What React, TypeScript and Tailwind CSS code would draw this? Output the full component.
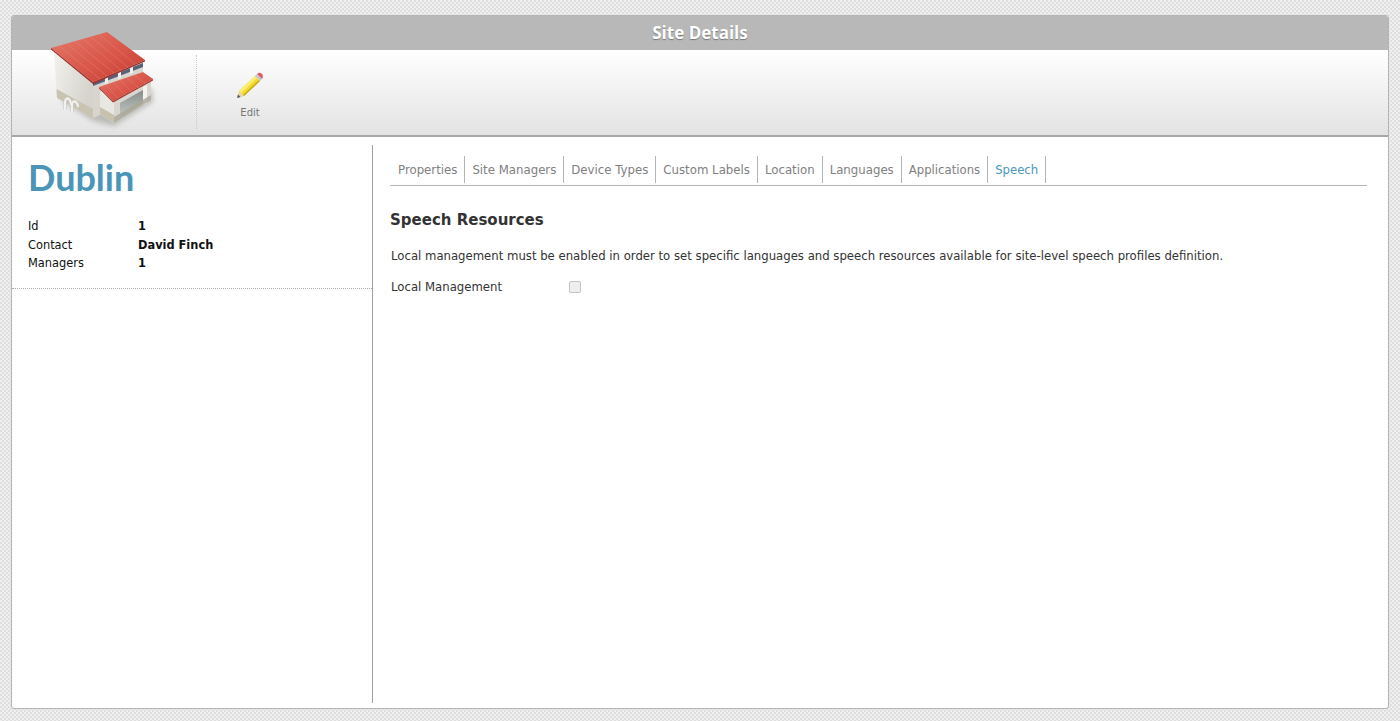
import React from "react";

function Building() {
  return (
    <svg width="125" height="105" viewBox="40 25 125 105" className="absolute left-[28px] top-[9px]">
      <defs>
        <linearGradient id="roof" x1="0" y1="0" x2="1" y2="1">
          <stop offset="0" stopColor="#e47a68" />
          <stop offset="0.55" stopColor="#d9564a" />
          <stop offset="1" stopColor="#c43c32" />
        </linearGradient>
        <linearGradient id="wall" x1="0" y1="0" x2="1" y2="0.4">
          <stop offset="0" stopColor="#f2f1ed" />
          <stop offset="1" stopColor="#d5d3cc" />
        </linearGradient>
        <linearGradient id="door" x1="0" y1="0" x2="0" y2="1">
          <stop offset="0" stopColor="#868d88" />
          <stop offset="1" stopColor="#c6cbc6" />
        </linearGradient>
        <filter id="blur" x="-30%" y="-30%" width="160%" height="160%">
          <feGaussianBlur stdDeviation="2.5" />
        </filter>
        <filter id="soft" x="-5%" y="-5%" width="110%" height="110%">
          <feGaussianBlur stdDeviation="0.35" />
        </filter>
      </defs>
      <path d="M60 100 L93 121 L114 126 L153 102 L152 88 L110 100 Z" fill="#85857f" opacity="0.45" filter="url(#blur)" />
      <g filter="url(#soft)">
        <path d="M54 52 L93 82 L93 118 L57 98 Z" fill="url(#wall)" />
        <path d="M56.5 89 L93 109 L93 118 L57 98 Z" fill="#c9c3b1" />
        <path d="M93 82 L143 62 L143 76 L100 92 L100 115 L93 118 Z" fill="#d7d5ce" />
        <path d="M93 83 L143 63 L143 67 L93 86 Z" fill="#59607a" />
        <path d="M105 77 L108 76 L108 83 L105 84 Z M118 72 L121 71 L121 78 L118 79 Z M130 67 L133 66 L133 73 L130 74 Z" fill="#f0efea" />
        <path d="M100 92 L114 102 L114 123 L100 114 Z" fill="#e9e7e1" />
        <path d="M100 107 L114 115 L114 123 L100 114 Z" fill="#c7c1ae" />
        <path d="M114 102 L151 81 L151 100 L114 123 Z" fill="#d8d6cf" />
        <path d="M120 103 L143 90 L143 103 L120 118 Z" fill="url(#door)" />
        <path d="M143 87 L147 85 L147 103 L143 105 Z" fill="#f4f3ef" />
        <path d="M114 117 L151 95 L151 100 L114 123 Z" fill="#a9a696" opacity="0.8" />
        <path d="M99 87 L143 72 L153 79 L113 101 Z" fill="url(#roof)" />
        <path d="M99 87 L113 101 L153 79 L153 80.5 L113 102.5 L99 88.5 Z" fill="#a8342b" />
        <g stroke="#e98a7a" strokeWidth="0.6" opacity="0.6">
          <path d="M106 85 L118 98 M113 82 L125 95 M120 80 L132 92 M127 78 L139 88 M134 75 L146 84" />
        </g>
        <path d="M51 48 L107 32 L145 60 L93 82 Z" fill="url(#roof)" />
        <path d="M51 48 L93 82 L145 60 L145 61.5 L93 84 L51 49.5 Z" fill="#9e3129" />
        <g stroke="#eb9384" strokeWidth="0.6" opacity="0.55">
          <path d="M59 46 L100 79 M67 44 L107 76 M75 41.5 L114 73 M83 39 L121 70 M91 37 L128 67 M99 34.5 L135 64" />
        </g>
        <g fill="none" stroke="#c4c4bf" strokeWidth="3.2">
          <path d="M65 110 L65 102 Q66 97 69 99 Q71 101 71 105" />
          <path d="M72 112 L72 104 Q73 100 76 102 Q78 104 78 107" />
        </g>
        <g fill="none" stroke="#f1f1ee" strokeWidth="2.2">
          <path d="M65 110 L65 102 Q66 97 69 99 Q71 101 71 105" />
          <path d="M72 112 L72 104 Q73 100 76 102 Q78 104 78 107" />
        </g>
      </g>
    </svg>
  );
}

function Pencil() {
  return (
    <svg width="28" height="28" viewBox="0 0 28 28" className="block">
      <path d="M1 26 L3 19 L8 24 Z" fill="#e8d3a8" />
      <path d="M1 26 L2 22.5 L4.5 25 Z" fill="#555" />
      <path d="M3 19 L19 4 L24 9 L8 24 Z" fill="#f2d92f" />
      <path d="M3 19 L19 4 L21 6 L5.5 21 Z" fill="#f9ee72" />
      <path d="M8 24 L24 9 L23 8 L7 23 Z" fill="#c9a71b" />
      <path d="M19 4 L21 2 L26 7 L24 9 Z" fill="#c9c9c9" />
      <path d="M21 2 L23 0.8 Q25 0.5 26.5 2.5 Q27.5 4.5 26 7 Z" fill="#d9606a" />
    </svg>
  );
}

const tabs = ["Properties", "Site Managers", "Device Types", "Custom Labels", "Location", "Languages", "Applications", "Speech"];

function tabClass(t: string) {
  if (t === "Speech") return "px-[7px] pt-[2px] h-[27px] flex items-center text-[11.7px] border-r border-[#b4b4b4] text-[#4b96b8]";
  if (t === "Applications") return "px-[7px] pt-[2px] h-[27px] flex items-center text-[11.7px] border-r border-[#b4b4b4] text-[#808080]";
  return "px-[7px] pt-[2px] h-[27px] flex items-center text-[11.76px] border-r border-[#b4b4b4] text-[#808080]";
}

export default function App() {
  return (
    <div className="h-[721px] overflow-hidden pt-[15px] px-[11px] bg-[#e6e6e6] bg-[repeating-conic-gradient(#dedede_0_25%,#f0f0f0_0_50%)] bg-[length:4px_4px] font-['DejaVu_Sans',sans-serif]">
      <div className="h-[694px] rounded-[3px] border border-[#b4b4b4] bg-white flex flex-col overflow-hidden">
        <div className="h-[34px] shrink-0 bg-[#b8b8b8] flex items-center justify-center text-white text-[17px] font-bold font-['Open_Sans',sans-serif] [text-shadow:0_1px_1px_#777]">
          Site Details
        </div>
        <div className="relative h-[87px] shrink-0 flex bg-gradient-to-b from-white to-[#e3e3e3] border-b-2 border-[#a8a8a8]">
          <div className="w-[185px] shrink-0 mt-[5px] mb-[6px] border-r border-dotted border-[#c8c8c8]" />
          <div className="w-[106px] flex flex-col items-center pt-[22px]">
            <Pencil />
            <span className="mt-[6px] text-[10px] leading-[14px] text-[#777]">Edit</span>
          </div>
        </div>
        <div className="absolute">
          <Building />
        </div>
        <div className="flex-1 flex min-h-0 pt-[8px] pb-[5px]">
          <div className="w-[361px] shrink-0 border-r border-[#a0a0a0]">
            <div className="h-[144px] border-b border-dotted border-[#aaa]">
              <h1 className="pl-[16px] pt-[8px] text-[36px] leading-[48px] font-bold text-[#4b96b8] font-['Lato',sans-serif]">Dublin</h1>
              <dl className="pl-[16px] mt-[16px] text-[11.4px] text-[#111]">
                <div className="flex h-[19px] items-center"><dt className="w-[110px]">Id</dt><dd className="font-bold">1</dd></div>
                <div className="flex h-[18px] mt-px items-center"><dt className="w-[110px]">Contact</dt><dd className="font-bold">David Finch</dd></div>
                <div className="flex h-[18px] items-center"><dt className="w-[110px]">Managers</dt><dd className="font-bold">1</dd></div>
              </dl>
            </div>
          </div>
          <div className="flex-1 pl-[17px] pr-[21px] pt-[11px]">
            <div className="flex h-[30px] border-b border-[#b4b4b4] pb-[2px] pl-px">
              {tabs.map((t) => (
                <div key={t} className={tabClass(t)}>
                  {t}
                </div>
              ))}
            </div>
            <h2 className="mt-[24px] text-[15px] leading-[20px] font-bold text-[#333]">Speech Resources</h2>
            <p className="mt-[16px] pl-px text-[11.7px] leading-[20px] text-[#333]">
              Local management must be enabled in order to set specific languages and speech resources available for site-level speech profiles definition.
            </p>
            <div className="mt-[11px] pl-px flex items-center h-[20px] text-[11.7px] text-[#333]">
              <span className="w-[178px] pt-px">Local Management</span>
              <span className="w-[12px] h-[12px] rounded-[2px] border border-[#c4c4c4] bg-[#eeeeee]" />
            </div>
          </div>
        </div>
      </div>
    </div>
  );
}
